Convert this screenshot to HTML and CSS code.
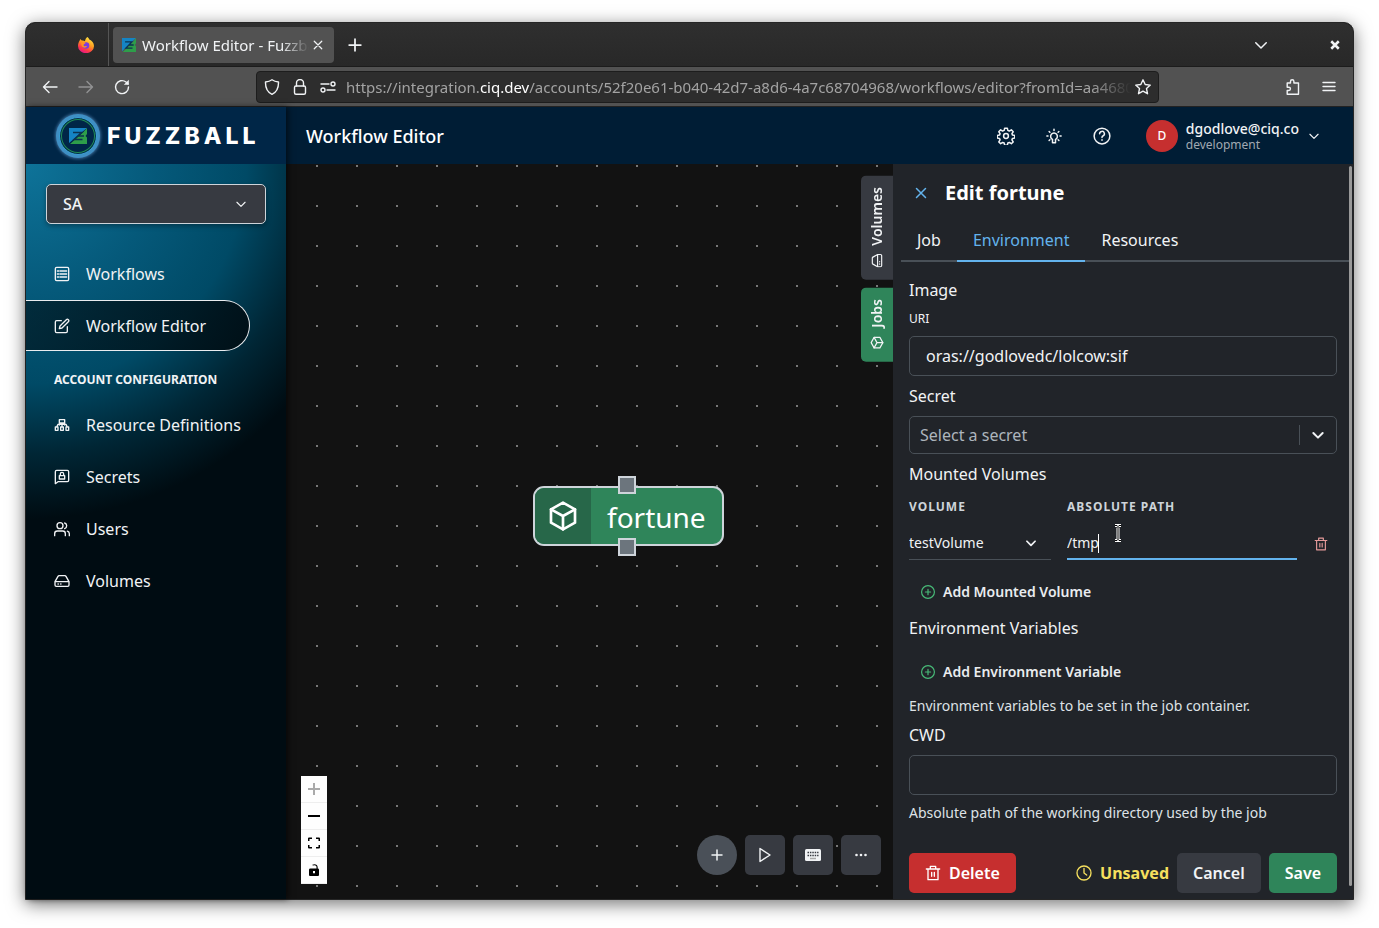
FILE: index.html
```html
<!DOCTYPE html>
<html lang="en">
<head>
<meta charset="utf-8">
<meta name="viewport" content="width=device-width, initial-scale=1">
<title>Workflow Editor - Fuzzball</title>
<link rel="stylesheet" href="styles.css">
</head>
<body>
<svg class="defs" aria-hidden="true">
  <defs>
    <symbol id="i-cube" viewBox="0 0 24 24"><path d="M12 2 21 7v10l-9 5-9-5V7z"/><path d="m3 7 9 5 9-5M12 12v10"/></symbol>
    <symbol id="i-drive" viewBox="0 0 24 24"><path d="M1.500 13h21M6 5l-4.500 8v5a2 2 0 0 0 2 2h17a2 2 0 0 0 2-2v-5L18 5a2 2 0 0 0-2-1H8a2 2 0 0 0-2 1zM6 16.500h.5M10 16.500h.5"/></symbol>
    <symbol id="i-down" viewBox="0 0 24 24"><path d="m5 9 7 7 7-7"/></symbol>
    <symbol id="i-trash" viewBox="0 0 24 24"><path d="M2 6h20M4.500 6v16h15V6M8 6V2h8v4M10 11v6M14 11v6"/></symbol>
    <symbol id="i-pluscircle" viewBox="0 0 24 24"><circle cx="12" cy="12" r="11"/><path d="M12 7.500v9M7.500 12h9"/></symbol>
    <symbol id="i-plus" viewBox="0 0 24 24"><path d="M12 2v20M2 12h20"/></symbol>
    <symbol id="i-x" viewBox="0 0 24 24"><path d="m3 3 18 18M21 3 3 21"/></symbol>
    <symbol id="i-fz" viewBox="0 0 18 16" preserveAspectRatio="none"><path fill="#1584c4" d="M0 0h18L0 15z"/><path fill="#2e9e4a" d="M18 0v6l-1.500 2L18 9.500V16H1L5 12.500l9-8z"/><path fill="none" stroke="#0b3350" stroke-width="1.500" d="M4 4.500h8.500L5 11.500h8.500M9 8h6"/></symbol>
  </defs>
</svg>

<div class="window">
  <header class="titlebar">
    <div class="pinned">
      <svg class="firefox" viewBox="0 0 16 16" aria-hidden="true">
        <defs><linearGradient id="ffx" x1=".8" y1="0" x2=".3" y2="1"><stop offset="0" stop-color="#fff04a"/><stop offset=".45" stop-color="#ff9a1f"/><stop offset=".75" stop-color="#ff3b47"/><stop offset="1" stop-color="#e4148c"/></linearGradient></defs>
        <path fill="url(#ffx)" d="M9.500 0c1 .8 1.500 1.600 1.800 2.500C13.800 3.700 16 5.800 16 9a8 7.200 0 0 1-16 0c0-2 .6-4 1.600-5.300L2.200 2l1.500 1.500C5 3.300 6 3.600 7 4.200 7.200 2.500 8 1 9.500 0z"/>
        <circle cx="8" cy="8.500" r="3.300" fill="#7a3be0"/>
        <path fill="#ff9320" d="M3.500 5.200c1.500-.7 3-.4 4.200.8L6 7.300c-.6.600-.6 1.500.3 1.900 1 .4 1.700-.4 2.700 0-.8 1.600-3.400 2.100-4.800.3C3.300 8.200 3.200 6.500 3.500 5.200z"/>
      </svg>
    </div>
    <div class="tab">
      <svg class="favicon" aria-hidden="true"><use href="#i-fz"/></svg>
      <span class="tab-title">Workflow Editor - Fuzzball</span>
      <button class="plain" aria-label="Close tab"><svg class="ic s10 mid"><use href="#i-x"/></svg></button>
    </div>
    <button class="plain newtab" aria-label="New tab"><svg class="ic s14 mid"><use href="#i-plus"/></svg></button>
    <span class="grow"></span>
    <button class="plain" aria-label="List all tabs"><svg class="ic s18"><use href="#i-down"/></svg></button>
    <button class="plain close" aria-label="Close window"><svg class="ic s10 thick"><use href="#i-x"/></svg></button>
  </header>

  <div class="toolbar">
    <div class="nav-buttons">
      <button class="plain" aria-label="Back"><svg class="ic s16" viewBox="0 0 16 16"><path d="M15 8H1.500M7 2.500 1.500 8 7 13.500"/></svg></button>
      <button class="plain dim" aria-label="Forward"><svg class="ic s16" viewBox="0 0 16 16"><path d="M1 8h13.500M9 2.500 14.500 8 9 13.500"/></svg></button>
      <button class="plain" aria-label="Reload"><svg class="ic s16" viewBox="0 0 16 16"><path d="M14.500 8A6.500 6.500 0 1 1 12 3l2 2"/><path class="solid" d="M14.800.8v5H9.800z"/></svg></button>
    </div>
    <div class="urlbar">
      <svg class="ic s16" viewBox="0 0 16 16"><path d="M8 .8c2 1.500 4 2 6.500 2.200.2 6-1.500 10-6.500 12.300C3 13 1.300 9 1.500 3 4 2.800 6 2.300 8 .8z"/></svg>
      <svg class="ic s16" viewBox="0 0 16 16"><rect x="2.500" y="7" width="11" height="8.300" rx="1.500"/><path d="M4.500 7V4a3.500 3.500 0 0 1 7 0v3"/></svg>
      <svg class="ic s16" viewBox="0 0 16 16"><circle cx="13" cy="5" r="2"/><circle cx="3" cy="11" r="2"/><path d="M1 5h8M7 11h8"/></svg>
      <span class="url">https://integration.<b>ciq.dev</b>/accounts/52f20e61-b040-42d7-a8d6-4a7c68704968/workflows/editor?fromId=aa4680</span>
      <button class="plain" aria-label="Bookmark"><svg class="ic s16" viewBox="0 0 16 16"><path d="m8 .8 2.200 4.700 5.100.6-3.800 3.500 1 5.100L8 12.200l-4.500 2.500 1-5.100L.7 6.100l5.100-.6z"/></svg></button>
    </div>
    <div class="tool-end">
      <button class="plain" aria-label="Extensions"><svg class="ic s16" viewBox="0 0 16 16"><path d="M5.500 4V2.500a1.700 1.700 0 0 1 3.400 0V4h4.600v11.300H2.200v-3.800h1.600a1.600 1.600 0 0 0 0-3.300H2.200V4z"/></svg></button>
      <button class="plain" aria-label="Menu"><svg class="ic s16" viewBox="0 0 16 16"><path d="M2 3.500h12M2 7.500h12M2 11.500h12"/></svg></button>
    </div>
  </div>

  <div class="app">
    <aside class="sidebar">
      <div class="brand">
        <span class="brand-mark"><svg aria-hidden="true"><use href="#i-fz"/></svg></span>
        <span class="brand-name">FUZZBALL</span>
      </div>
      <div class="side-body">
        <div class="account">
          <select aria-label="Account"><option>SA</option></select>
          <svg class="ic s14"><use href="#i-down"/></svg>
        </div>
        <nav>
          <ul class="nav-list">
            <li><a href="#"><svg class="ic s16" viewBox="0 0 24 24"><rect x="2" y="2" width="20" height="20" rx="2"/><path d="M9 7.500h10M9 12h10M9 16.500h10M5 7.500h2M5 12h2M5 16.500h2"/></svg>Workflows</a></li>
            <li><a href="#" class="active" aria-current="page"><svg class="ic s16" viewBox="0 0 24 24"><path d="M11 4H4a2 2 0 0 0-2 2v14a2 2 0 0 0 2 2h14a2 2 0 0 0 2-2v-7"/><path d="M18.500 2.500a2.100 2.100 0 0 1 3 3L12 15l-4 1 1-4z"/></svg>Workflow Editor</a></li>
          </ul>
          <h2 class="nav-heading">ACCOUNT CONFIGURATION</h2>
          <ul class="nav-list">
            <li><a href="#"><svg class="ic s16" viewBox="0 0 24 24"><path d="M8 4h8v5H8zM2 15h4v5H2zM10 15h4v5h-4zM18 15h4v5h-4zM12 9v6M4 15l2-4h12l2 4M8 9v3M16 9v3"/></svg>Resource Definitions</a></li>
            <li><a href="#"><svg class="ic s16" viewBox="0 0 24 24"><path d="M2 22V4a2 2 0 0 1 2-2h16a2 2 0 0 1 2 2v13a2 2 0 0 1-2 2H6z"/><path d="M8 10h8v5H8zM9.500 10V7.500a2.500 2.500 0 0 1 5 0V10"/></svg>Secrets</a></li>
            <li><a href="#"><svg class="ic s16" viewBox="0 0 24 24"><circle cx="9" cy="7" r="4.500"/><path d="M1 22v-3a4 4 0 0 1 4-4h8a4 4 0 0 1 4 4v3M16 3a4.500 4.500 0 0 1 0 8.500M23 22v-3a4 4 0 0 0-3-3.800"/></svg>Users</a></li>
            <li><a href="#"><svg class="ic s16"><use href="#i-drive"/></svg>Volumes</a></li>
          </ul>
        </nav>
      </div>
    </aside>

    <div class="main">
      <header class="page-head">
        <h1>Workflow Editor</h1>
        <div class="head-tools">
          <button class="plain" aria-label="Settings"><svg class="ic s18" viewBox="0 0 24 24"><circle cx="12" cy="12" r="3.200"/><path d="M10.200 1.500h3.600l.6 3 2 .9 2.700-1.700 2.500 2.600-1.700 2.500.8 2 3 .6v3.200l-3 .6-.8 2 1.700 2.600-2.500 2.500-2.600-1.700-2.100.8-.6 3h-3.600l-.6-3-2-.8-2.700 1.700-2.500-2.500 1.700-2.600-.8-2-3-.6v-3.200l3-.6.8-2-1.700-2.500 2.500-2.600 2.600 1.700 2.100-.9z"/></svg></button>
          <button class="plain" aria-label="Theme"><svg class="ic s18" viewBox="0 0 24 24"><path d="M10 16.500a4.500 4.500 0 1 1 4 0V21h-4zM12 3v1.500M5.500 6l1 1M18.500 6l-1 1M2.500 12H4M20 12h1.500M5.500 18l1-1M18.500 18l-1-1"/></svg></button>
          <button class="plain" aria-label="Help"><svg class="ic s18" viewBox="0 0 24 24"><circle cx="12" cy="12" r="10.500"/><path d="M8.800 9a3.200 3.200 0 1 1 4.400 3c-.8.400-1.200.900-1.200 2M12 17v.8"/></svg></button>
        </div>
        <button class="user plain">
          <span class="avatar">D</span>
          <span class="who"><strong>dgodlove@ciq.co</strong><small>development</small></span>
          <svg class="ic s14"><use href="#i-down"/></svg>
        </button>
      </header>

      <div class="work">
        <section class="canvas" aria-label="Workflow canvas">
          <div class="node">
            <span class="node-icon"><svg class="ic s32"><use href="#i-cube"/></svg></span>
            <span class="node-label">fortune</span>
            <i class="handle top"></i><i class="handle bottom"></i>
          </div>
          <div class="side-tabs">
            <button><svg class="ic s14"><use href="#i-drive"/></svg>Volumes</button>
            <button class="green"><svg class="ic s14"><use href="#i-cube"/></svg>Jobs</button>
          </div>
          <div class="zoom">
            <button aria-label="Zoom in" disabled><svg viewBox="0 0 12 12"><path d="M5 0h2v5h5v2H7v5H5V7H0V5h5z"/></svg></button>
            <button aria-label="Zoom out"><svg viewBox="0 0 12 12"><path d="M0 5h12v2H0z"/></svg></button>
            <button aria-label="Fit view"><svg viewBox="0 0 12 12"><path d="M0 4V1.500Q0 .5 1 .5h3V2H1.500v2zM8 .5h3q1 0 1 1V4h-1.500V2H8zM0 8h1.500v2H4v1.500H1q-1 0-1-1zM10.500 8H12v2.500q0 1-1 1H8V10h2.500z"/></svg></button>
            <button aria-label="Toggle lock"><svg viewBox="0 0 12 12"><path fill-rule="evenodd" d="M2.500 4.500h6V3.200C8.500 1.500 6.500.8 5 1.800L4.300.800C7-.8 9.700.8 9.700 3.200v1.300q1.300 0 1.300 1.200V11q0 1-1 1H2q-1 0-1-1V5.700q0-1.200 1.500-1.200zM5 7v2.200h2V7z"/></svg></button>
          </div>
          <div class="canvas-tools">
            <button class="round" aria-label="Add"><svg class="ic s12 mid"><use href="#i-plus"/></svg></button>
            <button aria-label="Run"><svg class="ic s16" viewBox="0 0 16 16"><path d="M3 1.500v13L13 8z"/></svg></button>
            <button aria-label="Keyboard shortcuts"><svg class="s16 kb" viewBox="0 0 16 16"><rect class="kb-body" y="2" width="16" height="12" rx="1.500"/><path class="kb-keys" d="M2.500 5.500h11M2.500 8.500h11"/><path class="kb-space" d="M5 11.500h6"/></svg></button>
            <button aria-label="More"><svg class="s16 fill" viewBox="0 0 16 16"><circle cx="3.500" cy="8" r="1.300"/><circle cx="8" cy="8" r="1.300"/><circle cx="12.500" cy="8" r="1.300"/></svg></button>
          </div>
        </section>

        <aside class="panel">
          <div class="panel-head">
            <button class="plain x" aria-label="Close"><svg class="ic s12 mid"><use href="#i-x"/></svg></button>
            <h2>Edit fortune</h2>
          </div>
          <div class="tabs" role="tablist">
            <button role="tab">Job</button>
            <button role="tab" aria-selected="true" class="on">Environment</button>
            <button role="tab">Resources</button>
          </div>
          <form class="form" onsubmit="return false">
            <h3>Image</h3>
            <label class="small" for="uri">URI</label>
            <input class="box" id="uri" type="text" value="oras://godlovedc/lolcow:sif">
            <label class="title" for="secret">Secret</label>
            <div class="secret">
              <select id="secret"><option>Select a secret</option></select>
              <span class="secret-arrow"><svg class="ic s16 bold"><use href="#i-down"/></svg></span>
            </div>
            <h3>Mounted Volumes</h3>
            <table class="mounts">
              <thead><tr><th class="c-vol" id="h-vol">VOLUME</th><th id="h-path">ABSOLUTE PATH</th><th class="c-del"></th></tr></thead>
              <tbody><tr>
                <td class="c-vol"><div class="vol"><select aria-labelledby="h-vol"><option>testVolume</option></select><svg class="ic s14 bold"><use href="#i-down"/></svg></div></td>
                <td><div class="path"><input type="text" value="/tmp" aria-labelledby="h-path"><i class="caret"></i>
                  <svg class="pointer" viewBox="0 0 8 18" aria-hidden="true"><path class="p-out" d="M1 1.500h2L4 2.500l1-1h2M4 2.500v13M1 16.500h2l1-1 1 1h2"/><path class="p-in" d="M1 1.500h2L4 2.500l1-1h2M4 2.500v13M1 16.500h2l1-1 1 1h2"/></svg></div></td>
                <td class="c-del"><button class="plain del" aria-label="Remove volume"><svg class="ic s14"><use href="#i-trash"/></svg></button></td>
              </tr></tbody>
            </table>
            <button class="add"><svg class="ic s14"><use href="#i-pluscircle"/></svg>Add Mounted Volume</button>
            <h3>Environment Variables</h3>
            <button class="add"><svg class="ic s14"><use href="#i-pluscircle"/></svg>Add Environment Variable</button>
            <p>Environment variables to be set in the job container.</p>
            <label class="title" for="cwd">CWD</label>
            <input class="box" id="cwd" type="text">
            <p>Absolute path of the working directory used by the job</p>
            <div class="actions">
              <button class="btn red"><svg class="ic s16"><use href="#i-trash"/></svg>Delete</button>
              <span class="unsaved"><svg class="ic s16" viewBox="0 0 24 24"><circle cx="12" cy="12" r="10.500"/><path d="M12 5v7l4 3"/></svg>Unsaved</span>
              <button class="btn">Cancel</button>
              <button class="btn save">Save</button>
            </div>
          </form>
          <i class="scrollbar"></i>
        </aside>
      </div>
    </div>
  </div>
</div>
</body>
</html>
```
FILE: styles.css
```css
* { box-sizing: border-box; }
body {
  margin: 0;
  min-height: 100vh;
  padding: 22px 25px 28px;
  display: flex;
  background: #fff;
  color: #f1f3f5;
  font: 16px/24px "Noto Sans", "Open Sans", sans-serif;
}
h1, h2, h3, p, ul { margin: 0; padding: 0; }
ul { list-style: none; }
button, input, select { font: inherit; color: inherit; border: 0; margin: 0; background: none; }
select { appearance: none; width: 100%; cursor: pointer; }
input { min-width: 0; outline: 0; }
button { cursor: pointer; }
svg { display: block; flex: none; }

.defs { position: absolute; width: 0; height: 0; }
.ic { fill: none; stroke: currentColor; stroke-width: 2; stroke-linecap: round; stroke-linejoin: round; }
.ic[viewBox="0 0 16 16"] { stroke-width: 1.4; }
.ic .solid { fill: currentColor; stroke: none; }
.fill { fill: currentColor; }
.mid { stroke-width: 3; }
.bold { stroke-width: 3; }
.thick { stroke-width: 6; stroke-linecap: butt; }
.s10 { width: 10px; height: 10px; }
.s12 { width: 12px; height: 12px; }
.s14 { width: 14px; height: 14px; }
.s16 { width: 16px; height: 16px; }
.s18 { width: 18px; height: 18px; }
.s32 { width: 32px; height: 32px; }
.plain { display: flex; align-items: center; justify-content: center; padding: 0; }
.grow { flex: 1; }

.window {
  flex: 1;
  min-width: 0;
  display: flex;
  flex-direction: column;
  border: 1px solid #262626;
  border-radius: 10px 10px 0 0;
  background: #121212;
  box-shadow: 0 4px 18px rgba(0, 0, 0, .55);
}

/* Browser chrome */
.titlebar {
  height: 44px;
  flex: none;
  display: flex;
  align-items: center;
  padding-right: 13px;
  border-radius: 9px 9px 0 0;
  background: linear-gradient(#2f2f2f, #282828);
  border-bottom: 1px solid #1c1c1c;
}
.pinned {
  width: 83px;
  align-self: stretch;
  display: flex;
  align-items: center;
  justify-content: flex-end;
  padding-right: 14px;
  border-right: 1px solid #555;
}
.firefox { width: 16px; height: 16px; }
.tab {
  width: 221px;
  height: 36px;
  margin-left: 4px;
  padding: 0 11px 0 9px;
  display: flex;
  align-items: center;
  gap: 6px;
  border-radius: 4px;
  background: #525252;
}
.favicon { width: 14px; height: 14px; }
.tab-title {
  flex: 1;
  min-width: 0;
  margin-right: -2px;
  overflow: hidden;
  white-space: nowrap;
  font-size: 15px;
  mask-image: linear-gradient(to right, #000 calc(100% - 28px), transparent);
}
.newtab { margin-left: 14px; }
.close { width: 10px; margin-left: 60px; }
.toolbar {
  height: 40px;
  flex: none;
  display: flex;
  align-items: center;
  justify-content: space-between;
  padding: 0 16px;
  background: #525252;
  border-bottom: 1px solid #222;
}
.nav-buttons, .tool-end { display: flex; gap: 20px; }
.nav-buttons { width: 198px; }
.tool-end { width: 162px; justify-content: flex-end; }
.dim { opacity: .4; }
.urlbar {
  flex: 1;
  min-width: 0;
  height: 32px;
  margin: 0 16px;
  padding: 0 7px;
  display: flex;
  align-items: center;
  gap: 12px;
  border: 1px solid #1d1d1d;
  border-radius: 4px;
  background: #2d2d2d;
}
.url {
  flex: 1;
  min-width: 0;
  margin: 0 -8px 0 -2px;
  overflow: hidden;
  white-space: nowrap;
  font-size: 15px;
  color: #a3a3a3;
  mask-image: linear-gradient(to right, #000 calc(100% - 40px), transparent);
}
.url b { color: #fff; font-weight: 400; }

/* Application frame */
.app { flex: 1; display: flex; min-height: 0; }
.sidebar { width: 260px; flex: none; display: flex; flex-direction: column; position: relative; box-shadow: 2px 0 6px rgba(0, 0, 0, .6); z-index: 1; }
.brand { height: 57px; flex: none; display: flex; align-items: center; gap: 10px; padding-left: 31px; background: #002647; }
.brand-mark {
  width: 38px;
  height: 38px;
  margin: 0 0 0 2px;
  display: grid;
  place-items: center;
  border-radius: 50%;
  border: 1px solid #3aa0d6;
  background: #002647;
  box-shadow: 0 0 0 3px #3f8fc4, 0 0 3px 4px #3a6c98, inset 0 0 0 1px #052c48, inset 0 0 0 2px #1f8a55;
}
.brand-mark svg { width: 18px; height: 16px; }
.brand-name { font: 800 23px/28px Inter, "Open Sans", sans-serif; letter-spacing: 4px; color: #fff; }
.side-body {
  flex: 1;
  padding-top: 20px;
  background: radial-gradient(circle at 0 0, #0e7399 0, #05597a 130px, #004a66 220px, #002635 290px, #000c12 355px);
}
.account { position: relative; margin: 0 20px 24px; }
.account select {
  height: 40px;
  padding: 0 16px;
  border: 1px solid #ced4da;
  border-radius: 5px;
  background: #373a41;
  font-weight: 500;
  box-shadow: 0 2px 5px rgba(0, 0, 0, .35);
}
.account svg { position: absolute; right: 18px; top: 13px; pointer-events: none; }
.nav-list { display: flex; flex-direction: column; }
.nav-list a {
  height: 52px;
  margin-right: 36px;
  padding-left: 28px;
  display: flex;
  align-items: center;
  gap: 16px;
  white-space: nowrap;
  color: inherit;
  text-decoration: none;
}
.nav-list .active {
  height: 51px;
  border: 1px solid #e9ecef;
  border-left: 0;
  border-radius: 0 26px 26px 0;
  background: linear-gradient(100deg, rgba(0, 20, 28, .65), rgba(0, 12, 18, .85));
}
.nav-heading { padding: 19px 28px 9px; font-size: 12px; line-height: 20px; font-weight: 700; }

.main { flex: 1; min-width: 0; display: flex; flex-direction: column; }
.page-head { height: 57px; flex: none; display: flex; align-items: center; padding: 0 32px 0 20px; background: #001d35; }
.page-head h1 { flex: 1; font-size: 18px; font-weight: 500; color: #fff; }
.head-tools { display: flex; gap: 30px; margin-right: 35px; }
.user { gap: 8px; text-align: left; }
.avatar { width: 32px; height: 32px; border-radius: 50%; display: grid; place-items: center; background: #c62f2f; font-size: 12px; font-weight: 500; color: #fff; }
.who { display: flex; flex-direction: column; }
.who strong { font-size: 14px; line-height: 17px; font-weight: 500; }
.who small { font-size: 12px; line-height: 15px; color: #a0a9b2; }

.work { flex: 1; display: flex; min-height: 0; }
.canvas {
  flex: 1;
  min-width: 0;
  position: relative;
  background: radial-gradient(circle at 1px 1px, #777 0, #777 1px, transparent 1px) 30px 1px / 40px 40px #121212;
}
.node {
  position: absolute;
  left: 247px;
  top: 322px;
  height: 60px;
  display: flex;
  border: 2px solid #ced4da;
  border-radius: 11px;
  background: #2f855a;
}
.node-icon { width: 56px; display: grid; place-items: center; border-radius: 9px 0 0 9px; background: #276749; color: #fff; }
.node-label { padding: 0 16px; font-size: 28px; line-height: 58px; color: #fff; }
.handle { position: absolute; left: 50%; width: 18px; height: 18px; margin-left: -10px; border: 2px solid #ced4da; background: #6c757d; }
.handle.top { top: -12px; }
.handle.bottom { bottom: -12px; }
.side-tabs { position: absolute; right: 0; top: 12px; display: flex; flex-direction: column; gap: 8px; }
.side-tabs button {
  width: 32px;
  padding: 12px 0 11px;
  display: flex;
  align-items: center;
  gap: 8px;
  writing-mode: vertical-rl;
  transform: rotate(180deg);
  border-radius: 0 5px 5px 0;
  background: #373a41;
  font-size: 14px;
  font-weight: 600;
}
.side-tabs svg { transform: rotate(90deg); }
.side-tabs .green { background: #2f855a; }
.zoom { position: absolute; left: 15px; bottom: 15px; display: flex; flex-direction: column; }
.zoom button { width: 26px; height: 27px; padding: 0; display: grid; place-items: center; background: #fefefe; border-bottom: 1px solid #eee; }
.zoom svg { width: 12px; height: 12px; }
.zoom button:disabled { opacity: 1; }
.zoom button:disabled svg { fill: #aaa; }
.canvas-tools { position: absolute; right: 12px; bottom: 24px; display: flex; gap: 8px; }
.canvas-tools button { width: 40px; height: 40px; padding: 0; display: grid; place-items: center; border-radius: 5px; background: #373a41; }
.canvas-tools .round { border-radius: 50%; background: #4a5058; }
.kb-body { fill: #f1f3f5; }
.kb-keys { fill: none; stroke: #373a41; stroke-width: 1.5; stroke-dasharray: 1.5 .9; }
.kb-space { stroke: #aaa; stroke-width: 1.5; }

/* Job editor */
.panel { width: 460px; flex: none; position: relative; display: flex; flex-direction: column; background: #212429; }
.panel-head { height: 57px; flex: none; display: flex; align-items: center; gap: 18px; padding-left: 22px; }
.panel-head h2 { font-size: 20px; font-weight: 700; color: #fff; }
.x { color: #63b3ed; }
.tabs { flex: none; display: flex; margin: 0 4px 0 8px; box-shadow: inset 0 -2px #495057; }
.tabs button { height: 41px; padding: 0 16px 2px; border-bottom: 2px solid transparent; }
.tabs .on { color: #63b3ed; border-color: #63b3ed; }
.form { flex: 1; display: flex; flex-direction: column; gap: 8px; padding: 16px 16px 6px; }
.form h3, .title { font-size: 16px; font-weight: 400; line-height: 24px; }
.small { font-size: 12px; line-height: 18px; }
.box { height: 40px; padding: 0 16px; border: 1px solid #495057; border-radius: 5px; }
.secret { height: 38px; display: flex; align-items: center; position: relative; border: 1px solid #495057; border-radius: 5px; }
.secret select { height: 36px; padding: 0 48px 0 10px; color: #adb5bd; }
.secret-arrow { position: absolute; right: 0; top: 8px; padding: 2px 10px; border-left: 1px solid #495057; pointer-events: none; }
.mounts { width: 100%; table-layout: fixed; border-collapse: collapse; font-size: 14px; }
.mounts th { height: 25px; padding: 0; text-align: left; font-size: 12px; line-height: 25px; font-weight: 700; letter-spacing: 1px; color: #ced4da; }
.mounts td { padding: 8px 0 0; }
.mounts .c-vol { width: 158px; padding-right: 16px; }
.mounts .c-del { width: 40px; padding-left: 8px; }
.vol { position: relative; border-bottom: 1px solid #495057; }
.vol select { display: block; height: 32px; padding: 0; }
.vol svg { position: absolute; right: 13px; top: 9px; pointer-events: none; }
.path { position: relative; border-bottom: 2px solid #63b3ed; }
.path input { display: block; width: 100%; height: 31px; padding: 0; }
.caret { position: absolute; left: 31px; top: 7px; width: 1px; height: 19px; background: #fff; }
.pointer { position: absolute; left: 47px; top: -3px; width: 8px; height: 18px; fill: none; }
.p-out { stroke: #fff; stroke-width: 3; }
.p-in { stroke: #000; stroke-width: 1; }
.del { width: 32px; height: 32px; color: #e59a9a; }
.add { align-self: flex-start; height: 32px; margin-top: 8px; padding: 0 12px; display: flex; align-items: center; gap: 8px; font-size: 14px; font-weight: 600; color: #e9ecef; }
.add svg { color: #48bb78; }
.form p { font-size: 14px; line-height: 19px; color: #dee2e6; }
.actions { margin-top: auto; display: flex; align-items: center; gap: 8px; font-weight: 600; }
.btn { height: 40px; padding: 0 16px; display: flex; align-items: center; gap: 8px; border-radius: 5px; background: #373a41; font-weight: 600; }
.red { background: #c62f2f; color: #fff; }
.save { background: #2f855a; color: #fff; }
.unsaved { margin-left: auto; display: flex; align-items: center; gap: 8px; font-weight: 700; color: #f6e05e; }
.scrollbar { position: absolute; right: 1px; top: 2px; bottom: 13px; width: 3px; border-radius: 2px; background: #999; }
```
